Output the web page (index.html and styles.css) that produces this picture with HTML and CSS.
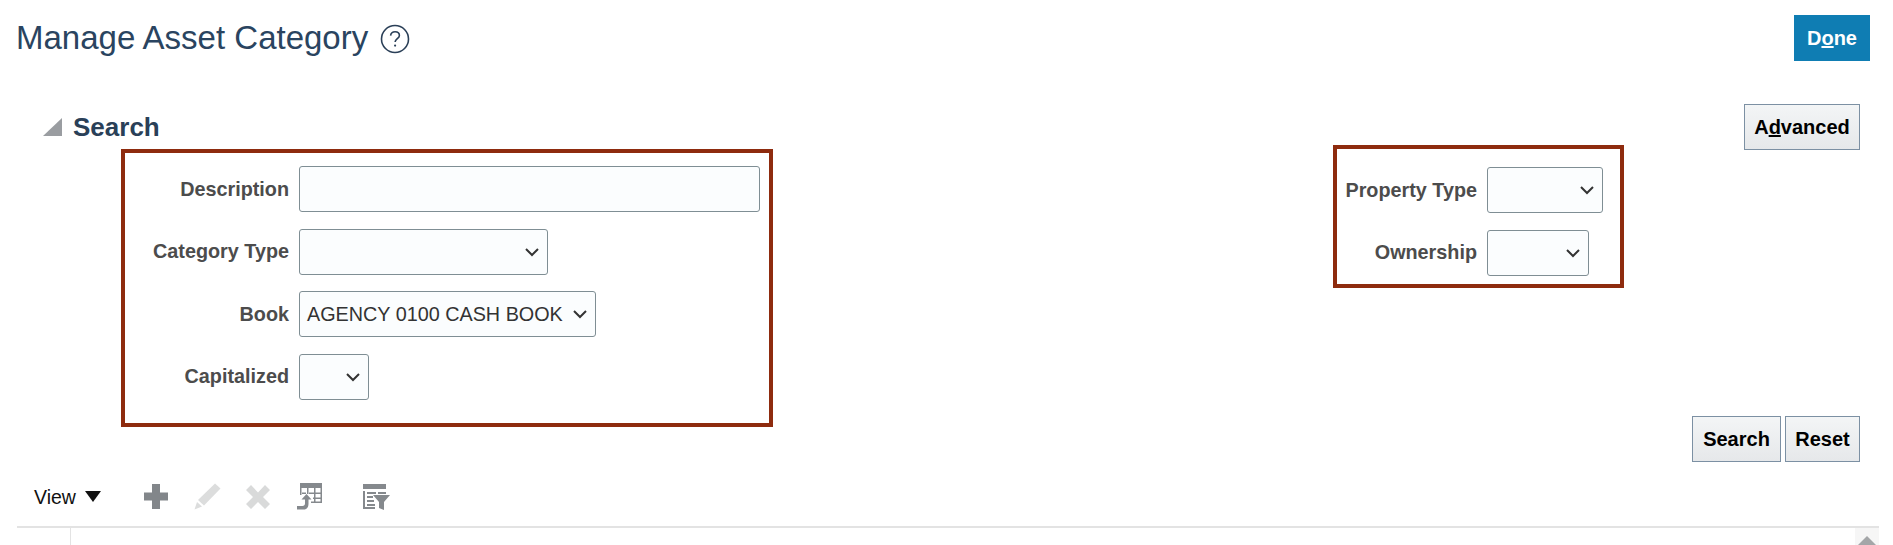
FILE: index.html
```html
<!DOCTYPE html>
<html lang="en">
<head>
<meta charset="utf-8">
<title>Manage Asset Category</title>
<link rel="stylesheet" href="styles.css">
</head>
<body>
<header class="page-header">
  <div class="title-group">
    <h1 class="page-title">Manage Asset Category</h1>
    <svg class="help-icon" width="30" height="30" viewBox="0 0 30 30"><circle cx="15" cy="15" r="13.500" fill="none" stroke="#2b4058" stroke-width="1.600"/><path d="M10.600 11.600c.3-2.500 2.100-3.900 4.500-3.900 2.500 0 4.300 1.500 4.300 3.700 0 3.200-4.100 3.300-4.300 6.600" fill="none" stroke="#2b4058" stroke-width="1.600"/><circle cx="15.100" cy="21.600" r="1.100" fill="#2b4058"/></svg>
  </div>
  <button class="btn-primary">D<u>o</u>ne</button>
</header>

<section class="search">
  <div class="search-head">
    <svg class="disclosure" width="20" height="18" viewBox="0 0 20 18"><path d="M19 0v18H0z" fill="#9a9da1"/></svg>
    <h2 class="search-title">Search</h2>
    <button class="btn btn-advanced">A<u>d</u>vanced</button>
  </div>

  <div class="fields">
    <div class="mark mark-left">
      <div class="field"><span class="label">Description</span><input class="input w-desc" type="text"></div>
      <div class="field"><span class="label">Category Type</span><div class="select w-cat"><svg class="chev" width="16" height="10" viewBox="0 0 16 10"><path d="M2 2l6 6 6-6"/></svg></div></div>
      <div class="field"><span class="label">Book</span><div class="select w-book"><span>AGENCY 0100 CASH BOOK</span><svg class="chev" width="16" height="10" viewBox="0 0 16 10"><path d="M2 2l6 6 6-6"/></svg></div></div>
      <div class="field"><span class="label">Capitalized</span><div class="select w-cap"><svg class="chev" width="16" height="10" viewBox="0 0 16 10"><path d="M2 2l6 6 6-6"/></svg></div></div>
    </div>
    <div class="mark mark-right">
      <div class="field"><span class="label">Property Type</span><div class="select w-prop"><svg class="chev" width="16" height="10" viewBox="0 0 16 10"><path d="M2 2l6 6 6-6"/></svg></div></div>
      <div class="field"><span class="label">Ownership</span><div class="select w-own"><svg class="chev" width="16" height="10" viewBox="0 0 16 10"><path d="M2 2l6 6 6-6"/></svg></div></div>
    </div>
  </div>

  <div class="actions">
    <button class="btn btn-search">Search</button>
    <button class="btn btn-reset">Reset</button>
  </div>
</section>

<div class="toolbar">
  <span class="view">View</span>
  <svg class="caret" width="16" height="11" viewBox="0 0 16 11"><path d="M0 0h16L8 11z" fill="#111"/></svg>
  <svg class="tool tool-add" width="24" height="25" viewBox="0 0 24 25"><path d="M8 0h8v8.500h8v8h-8V25H8v-8.500H0v-8h8z" fill="#82868a"/></svg>
  <svg class="tool tool-edit" width="27" height="27" viewBox="0 0 27 27"><path d="M21 0.500l5.500 5L10 22.500l-6 -5.500z" fill="#dcdddd"/><path d="M3 19l5 4.500-7.500 3z" fill="#dcdddd"/></svg>
  <svg class="tool tool-del" width="24" height="24" viewBox="0 0 24 24"><path d="M5 0l7 7.500L19 0l5 5-7 7 7 7-5 5-7-7-7 7-5-5 7-7-7-7z" fill="#d9dada"/></svg>
  <svg class="tool tool-export" width="25" height="27" viewBox="0 0 25 27"><path d="M3 0h22v5H3zM3 5h1.500v7H3zM10 5h1.500v6H10zM17 5h1.500v14H17zM23.500 5H25v15H23.500zM5 9.500h4v1.500H5zM12 9.500h12v1.500H12zM16 14.500h8V16h-8zM14 18.500h10V20H14z" fill="#85898d"/><path d="M9.500 11l5 5.500h-3v4c0 3.500-1.500 6-4.500 6H0V23h5.500c1.500 0 2.500-1 2.500-2.500v-4H4.500z" fill="#85898d"/></svg>
  <svg class="tool tool-filter" width="27" height="26" viewBox="0 0 27 26"><path d="M0 0h23v5H0zM0 7h2v16h10v2H0zM4 8h9v2H4zM15 8h8v2h-8zM4 12h6v2H4zM4 16h7v2H4zM4 20h8v2H4z" fill="#85898d"/><path d="M10 11h17l-6 7v8l-5-2v-6z" fill="#85898d"/></svg>
</div>

<div class="table-area">
  <div class="table-gutter"></div>
  <div class="table-body"></div>
  <div class="scrollbar"><svg width="20" height="10" viewBox="0 0 20 10"><path d="M10 0l10 10H0z" fill="#a4a6a8"/></svg></div>
</div>
</body>
</html>
```
FILE: styles.css
```css
* { box-sizing: border-box; }
html, body { margin: 0; padding: 0; }
body {
  width: 1893px;
  height: 545px;
  overflow: hidden;
  background: #fff;
  font-family: "Liberation Sans", Arial, sans-serif;
  font-size: 20px;
  color: #000;
}
button { font-family: inherit; cursor: pointer; }
.page-header {
  display: flex;
  justify-content: space-between;
  align-items: flex-start;
  padding: 15px 23px 0 16px;
  height: 104px;
}
.title-group { display: flex; align-items: center; gap: 12px; height: 46px; }
.page-title { margin: 0; font-size: 33px; font-weight: 400; line-height: 46px; color: #2a4460; }
.help-icon { display: block; margin-top: 1px; }
.btn-primary {
  width: 76px;
  height: 46px;
  border: 0;
  padding: 0;
  background: #0f7db3;
  color: #fff;
  font-size: 20px;
  font-weight: 700;
}
.btn {
  height: 46px;
  padding: 0;
  border: 1px solid #7c90a3;
  background: linear-gradient(#f3f5f6, #e6e8ea);
  color: #000;
  font-size: 20px;
  font-weight: 700;
}
.search-head {
  display: flex;
  align-items: flex-start;
  height: 41px;
  padding: 0 33px 0 43px;
}
.disclosure { display: block; margin-top: 14px; }
.search-title { margin: 6px 0 0 10px; font-size: 26px; line-height: 34px; font-weight: 700; color: #2a4058; }
.btn-advanced { width: 116px; margin-left: auto; }
.fields { display: flex; align-items: flex-start; padding-left: 121px; }
.mark { border: 4px solid #8e2b0e; }
.mark-left {
  width: 652px;
  height: 278px;
  margin-top: 4px;
  padding: 13px 8px 0 1px;
}
.mark-right {
  width: 291px;
  height: 143px;
  margin-left: 560px;
  padding: 18px 0 0 0;
}
.field { display: flex; align-items: center; height: 46px; margin-bottom: 16.500px; }
.mark-left .label { width: 163px; }
.mark-right .label { width: 140px; }
.label {
  flex: none;
  text-align: right;
  font-size: 19.800px;
  font-weight: 700;
  color: #4c4c4c;
}
.mark-left .input, .mark-left .select { margin-left: 10px; }
.mark-right .select { margin-left: 10px; }
.input, .select {
  height: 46px;
  border: 1px solid #7f8e94;
  border-radius: 3px;
  background: #fbfdfe;
}
.select {
  display: flex;
  align-items: center;
  justify-content: space-between;
  padding: 0 7px 0 7px;
  font-size: 19.800px;
  color: #333;
}
.select .chev { margin-left: auto; }
.chev { display: block; fill: none; stroke: #333; stroke-width: 2; }
.w-desc { width: 461px; }
.w-cat { width: 249px; }
.w-book { width: 297px; }
.w-cap { width: 70px; }
.w-prop { width: 116px; }
.w-own { width: 102px; }
.actions {
  display: flex;
  justify-content: flex-end;
  gap: 4px;
  margin-top: -11px;
  padding-right: 33px;
}
.btn-search { width: 89px; }
.btn-reset { width: 75px; }
.toolbar {
  display: flex;
  align-items: center;
  height: 64px;
  padding: 5px 0 0 34px;
}
.view { font-size: 19.500px; line-height: 24px; color: #111; }
.caret { display: block; margin-left: 9px; }
.tool { display: block; }
.tool-add { margin-left: 43px; }
.tool-edit { margin-left: 26px; }
.tool-del { margin-left: 25px; }
.tool-export { margin-left: 27px; }
.tool-filter { margin-left: 41px; }
.table-area {
  display: flex;
  height: 19px;
  margin: 0 14px 0 17px;
  border-top: 2px solid #e3e3e3;
}
.table-gutter { width: 54px; border-right: 1px solid #e3e3e3; }
.table-body { flex: 1; }
.scrollbar {
  width: 24px;
  background: #f6f6f6;
  display: flex;
  justify-content: center;
  padding-top: 8px;
}
.scrollbar svg { display: block; }
```
